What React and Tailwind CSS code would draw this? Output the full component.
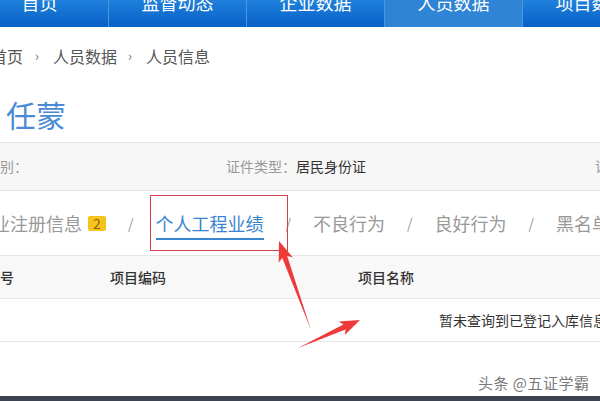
import React from 'react';

const font = { fontFamily: '"Noto Sans CJK SC", "Noto Sans", sans-serif' };

const navItems = ['首页', '监督动态', '企业数据', '人员数据', '项目数据'];

function arrowPoints(tx, ty, hx, hy) {
  const dx = hx - tx;
  const dy = hy - ty;
  const len = Math.hypot(dx, dy);
  const ux = dx / len;
  const uy = dy / len;
  const nx = -uy;
  const ny = ux;
  const at = (d, w) => [tx + ux * d + nx * w, ty + uy * d + ny * w];
  const head = len - 17;
  const pts = [
    at(0, 0),
    at(head, 2.6),
    at(head - 3, 7.5),
    at(len, 0),
    at(head - 3, -7.5),
    at(head, -2.6),
  ];
  return pts.map((p) => p.map((v) => v.toFixed(1)).join(',')).join(' ');
}

export default function App() {
  return (
    <div className="relative flex h-[401px] w-[600px] flex-col overflow-hidden bg-white" style={font}>
      {/* Top nav */}
      <div className="flex h-[27px] shrink-0 overflow-hidden bg-gradient-to-b from-[#1f80dc] to-[#0660c6]">
        <div className="-ml-[29px] flex">
          {navItems.map((item, i) => (
            <div
              key={item}
              className={`flex w-[138px] shrink-0 justify-center border-r border-[#4b95de] ${
                i === 3 ? 'bg-[#2f84d6]' : ''
              }`}
            >
              <span className="-mt-[7px] text-[18px] leading-[18px] text-white">{item}</span>
            </div>
          ))}
        </div>
      </div>

      {/* Breadcrumb */}
      <div className="-ml-[9px] flex h-[58px] shrink-0 items-center text-[16px] text-[#555]">
        <span>首页</span>
        <span className="ml-[12px] mr-[14px] text-[13px] text-[#777]">›</span>
        <span>人员数据</span>
        <span className="ml-[11px] mr-[14px] text-[13px] text-[#777]">›</span>
        <span>人员信息</span>
      </div>

      {/* Name */}
      <div className="flex h-[57px] shrink-0 items-center pl-[6px]">
        <span className="text-[30px] leading-none text-[#4a8bd4]">任蒙</span>
      </div>

      {/* Info row */}
      <div className="flex h-[49px] shrink-0 items-center border-y border-[#e6e6e6] bg-[#f7f7f7] text-[14px]">
        <div className="-ml-[14px] w-[240px] shrink-0 text-[#999]">性别：</div>
        <div className="flex w-[369px] shrink-0">
          <span className="text-[#999]">证件类型：</span>
          <span className="text-[#333]">居民身份证</span>
        </div>
        <span className="shrink-0 text-[#999]">证件号码：</span>
      </div>

      {/* Tabs */}
      <div className="flex h-[65px] shrink-0 items-center border-b border-[#e6e6e6] text-[18px] leading-[18px] text-[#999]">
        <div className="-ml-[26px] flex shrink-0 items-center">
          <span>企业注册信息</span>
          <span className="ml-[6px] flex h-[15px] w-[18px] items-center justify-center rounded-[2px] bg-[#f6c21c] text-[14px] text-[#8a6a00]">
            2
          </span>
        </div>
        <span className="mx-[22px] shrink-0 text-[14px]">/</span>
        <span className="mt-[8px] shrink-0 border-b-2 border-[#3a85d0] pb-[6px] text-[#3a85d0]">个人工程业绩</span>
        <span className="mx-[22px] shrink-0 text-[14px]">/</span>
        <span className="shrink-0">不良行为</span>
        <span className="mx-[22px] shrink-0 text-[14px]">/</span>
        <span className="shrink-0">良好行为</span>
        <span className="mx-[22px] shrink-0 text-[14px]">/</span>
        <span className="shrink-0">黑名单记录</span>
      </div>

      {/* Table header */}
      <div className="flex h-[43px] shrink-0 items-center border-b border-[#e5e5e5] bg-[#f8f8f9] text-[14px] font-medium text-[#333]">
        <span className="-ml-[14px] w-[124px] shrink-0">序号</span>
        <span className="w-[248px] shrink-0">项目编码</span>
        <span className="shrink-0">项目名称</span>
      </div>

      {/* Empty row */}
      <div className="flex h-[43px] shrink-0 items-center border-b border-[#e5e5e5] pl-[439px] text-[14px] text-[#333]">
        <span className="shrink-0 whitespace-nowrap">暂未查询到已登记入库信息</span>
      </div>

      <div className="flex-1" />
      <div className="h-[5px] shrink-0 bg-[#3d4150]" />

      {/* Annotation overlay */}
      <svg className="pointer-events-none absolute left-0 top-0" width="600" height="401" viewBox="0 0 600 401">
        <rect x="150.5" y="195.5" width="137" height="55" fill="none" stroke="#d8414b" strokeWidth="1" />
        <polygon points={arrowPoints(311, 330, 279, 241)} fill="#ef3a3a" />
        <polygon points={arrowPoints(298, 348, 360, 320)} fill="#ef3a3a" />
      </svg>

      {/* Watermark */}
      <span className="absolute left-[478px] top-[372px] text-[15px] tracking-[0.5px] text-[#7a7a7a] [text-shadow:0_0_2px_#fff]">
        头条 @五证学霸
      </span>
    </div>
  );
}
